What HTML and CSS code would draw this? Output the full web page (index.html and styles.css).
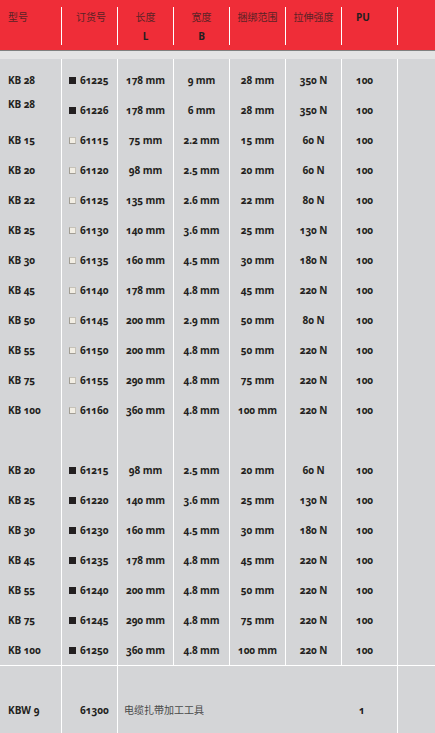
FILE: index.html
```html
<!DOCTYPE html>
<html lang="zh">
<head>
<meta charset="utf-8">
<link rel="stylesheet" href="styles.css">
</head>
<body>
<div class="page">
  <div class="head">
    <div class="head-grid">
      <div class="hc hc-left">型号</div>
      <div class="hc hc-pad">订货号</div>
      <div class="hc hc-center">长度<b>L</b></div>
      <div class="hc hc-center">宽度<b>B</b></div>
      <div class="hc hc-center">捆绑范围</div>
      <div class="hc hc-center">拉伸强度</div>
      <div class="hc hc-pad"><b class="pu">PU</b></div>
      <div class="hc"></div>
    </div>
  </div>
  <div class="rule"></div>
  <div class="band"></div>

  <div class="table">
    <div class="c sp"></div><div class="c sp"></div><div class="c sp"></div><div class="c sp"></div><div class="c sp"></div><div class="c sp"></div><div class="c sp"></div><div class="c sp"></div>

    <div class="c l">KB 28</div><div class="c o"><i class="sq dk"></i>61225</div><div class="c m">178 mm</div><div class="c m">9 mm</div><div class="c m">28 mm</div><div class="c m">350 N</div><div class="c p">100</div><div class="c"></div>
    <div class="c l up">KB 28</div><div class="c o"><i class="sq dk"></i>61226</div><div class="c m">178 mm</div><div class="c m">6 mm</div><div class="c m">28 mm</div><div class="c m">350 N</div><div class="c p">100</div><div class="c"></div>
    <div class="c l">KB 15</div><div class="c o"><i class="sq lt"></i>61115</div><div class="c m">75 mm</div><div class="c m">2.2 mm</div><div class="c m">15 mm</div><div class="c m">60 N</div><div class="c p">100</div><div class="c"></div>
    <div class="c l">KB 20</div><div class="c o"><i class="sq lt"></i>61120</div><div class="c m">98 mm</div><div class="c m">2.5 mm</div><div class="c m">20 mm</div><div class="c m">60 N</div><div class="c p">100</div><div class="c"></div>
    <div class="c l">KB 22</div><div class="c o"><i class="sq lt"></i>61125</div><div class="c m">135 mm</div><div class="c m">2.6 mm</div><div class="c m">22 mm</div><div class="c m">80 N</div><div class="c p">100</div><div class="c"></div>
    <div class="c l">KB 25</div><div class="c o"><i class="sq lt"></i>61130</div><div class="c m">140 mm</div><div class="c m">3.6 mm</div><div class="c m">25 mm</div><div class="c m">130 N</div><div class="c p">100</div><div class="c"></div>
    <div class="c l">KB 30</div><div class="c o"><i class="sq lt"></i>61135</div><div class="c m">160 mm</div><div class="c m">4.5 mm</div><div class="c m">30 mm</div><div class="c m">180 N</div><div class="c p">100</div><div class="c"></div>
    <div class="c l">KB 45</div><div class="c o"><i class="sq lt"></i>61140</div><div class="c m">178 mm</div><div class="c m">4.8 mm</div><div class="c m">45 mm</div><div class="c m">220 N</div><div class="c p">100</div><div class="c"></div>
    <div class="c l">KB 50</div><div class="c o"><i class="sq lt"></i>61145</div><div class="c m">200 mm</div><div class="c m">2.9 mm</div><div class="c m">50 mm</div><div class="c m">80 N</div><div class="c p">100</div><div class="c"></div>
    <div class="c l">KB 55</div><div class="c o"><i class="sq lt"></i>61150</div><div class="c m">200 mm</div><div class="c m">4.8 mm</div><div class="c m">50 mm</div><div class="c m">220 N</div><div class="c p">100</div><div class="c"></div>
    <div class="c l">KB 75</div><div class="c o"><i class="sq lt"></i>61155</div><div class="c m">290 mm</div><div class="c m">4.8 mm</div><div class="c m">75 mm</div><div class="c m">220 N</div><div class="c p">100</div><div class="c"></div>
    <div class="c l">KB 100</div><div class="c o"><i class="sq lt"></i>61160</div><div class="c m">360 mm</div><div class="c m">4.8 mm</div><div class="c m">100 mm</div><div class="c m">220 N</div><div class="c p">100</div><div class="c"></div>

    <div class="c"></div><div class="c"></div><div class="c"></div><div class="c"></div><div class="c"></div><div class="c"></div><div class="c"></div><div class="c"></div>

    <div class="c l">KB 20</div><div class="c o"><i class="sq dk"></i>61215</div><div class="c m">98 mm</div><div class="c m">2.5 mm</div><div class="c m">20 mm</div><div class="c m">60 N</div><div class="c p">100</div><div class="c"></div>
    <div class="c l">KB 25</div><div class="c o"><i class="sq dk"></i>61220</div><div class="c m">140 mm</div><div class="c m">3.6 mm</div><div class="c m">25 mm</div><div class="c m">130 N</div><div class="c p">100</div><div class="c"></div>
    <div class="c l">KB 30</div><div class="c o"><i class="sq dk"></i>61230</div><div class="c m">160 mm</div><div class="c m">4.5 mm</div><div class="c m">30 mm</div><div class="c m">180 N</div><div class="c p">100</div><div class="c"></div>
    <div class="c l">KB 45</div><div class="c o"><i class="sq dk"></i>61235</div><div class="c m">178 mm</div><div class="c m">4.8 mm</div><div class="c m">45 mm</div><div class="c m">220 N</div><div class="c p">100</div><div class="c"></div>
    <div class="c l">KB 55</div><div class="c o"><i class="sq dk"></i>61240</div><div class="c m">200 mm</div><div class="c m">4.8 mm</div><div class="c m">50 mm</div><div class="c m">220 N</div><div class="c p">100</div><div class="c"></div>
    <div class="c l">KB 75</div><div class="c o"><i class="sq dk"></i>61245</div><div class="c m">290 mm</div><div class="c m">4.8 mm</div><div class="c m">75 mm</div><div class="c m">220 N</div><div class="c p">100</div><div class="c"></div>
    <div class="c l">KB 100</div><div class="c o"><i class="sq dk"></i>61250</div><div class="c m">360 mm</div><div class="c m">4.8 mm</div><div class="c m">100 mm</div><div class="c m">220 N</div><div class="c p">100</div><div class="c"></div>
  </div>

  <div class="last">
    <div class="lc l">KBW 9</div>
    <div class="lc o2">61300</div>
    <div class="lc merged"><span class="desc">电缆扎带加工工具</span><span class="qty">1</span></div>
    <div class="lc"></div>
  </div>
</div>
</body>
</html>
```

FILE: styles.css
```css
* { box-sizing: border-box; }
html, body { margin: 0; padding: 0; }
body {
  width: 435px;
  background: #d4d5d7;
  font-family: "Open Sans", "Noto Sans", sans-serif;
  color: #231f20;
  overflow: hidden;
}
.page { width: 435px; }

.head {
  background: #ef2d38;
  height: 50px;
  padding-top: 7px;
}
.head-grid {
  display: grid;
  grid-template-columns: 61px 55px 55px 55px 55px 55px 55px 1fr;
  column-gap: 1px;
  background: #ffffff;
  height: 38px;
}
.hc {
  background: #ef2d38;
  font-family: "Noto Sans CJK SC", "Noto Sans", sans-serif;
  font-size: 10px;
  line-height: 14px;
  color: #5a2226;
  padding-top: 3px;
  display: flex;
  flex-direction: column;
}
.hc b {
  font-family: "Open Sans", sans-serif;
  font-weight: 700;
  font-size: 10px;
  color: #231f20;
  margin-top: 6px;
  line-height: 12px;
}
.hc .pu { margin-top: 0; line-height: 14px; }
.hc-left { padding-left: 8px; }
.hc-pad { padding-left: 14px; }
.hc-center { align-items: center; }

.rule { height: 1px; background: #80807f; }
.band { height: 8px; background: #e4e4e4; }

.table {
  display: grid;
  grid-template-columns: 61px 55px 55px 55px 55px 55px 55px 1fr;
  grid-template-rows: 6px;
  grid-auto-rows: 30px;
  column-gap: 1px;
  background: #ffffff;
}
.c {
  background: #d4d5d7;
  font-size: 10px;
  font-weight: 700;
  font-variant-numeric: oldstyle-nums;
  display: flex;
  align-items: center;
  white-space: nowrap;
  letter-spacing: -0.1px;
}
.l { padding-left: 8px; }
.up { padding-bottom: 12px; }
.o { padding-left: 7px; }
.m { justify-content: center; }
.p { padding-left: 14px; }

.sq {
  display: block;
  flex: none;
  width: 7px;
  height: 7px;
  margin-right: 4px;
}
.sq.dk { background: #231f20; }
.sq.lt {
  background: #f1ede3;
  border: 1px solid #c6c2b8;
  border-left-color: #a19d94;
  border-bottom-color: #a19d94;
}

.last {
  display: grid;
  grid-template-columns: 61px 55px 279px 1fr;
  column-gap: 1px;
  background: #ffffff;
  border-top: 1px solid #ffffff;
  height: 90px;
}
.lc {
  background: #d4d5d7;
  font-size: 10px;
  font-weight: 700;
  font-variant-numeric: oldstyle-nums;
  padding-top: 37px;
  line-height: 14px;
  white-space: nowrap;
}
.o2 { padding-left: 18px; }
.merged { display: flex; padding-left: 6px; }
.desc {
  font-family: "Noto Sans CJK SC", "Noto Sans", sans-serif;
  font-weight: 400;
  font-size: 10px;
  color: #4a4a4a;
  flex: 1;
}
.qty { width: 38px; }
```
